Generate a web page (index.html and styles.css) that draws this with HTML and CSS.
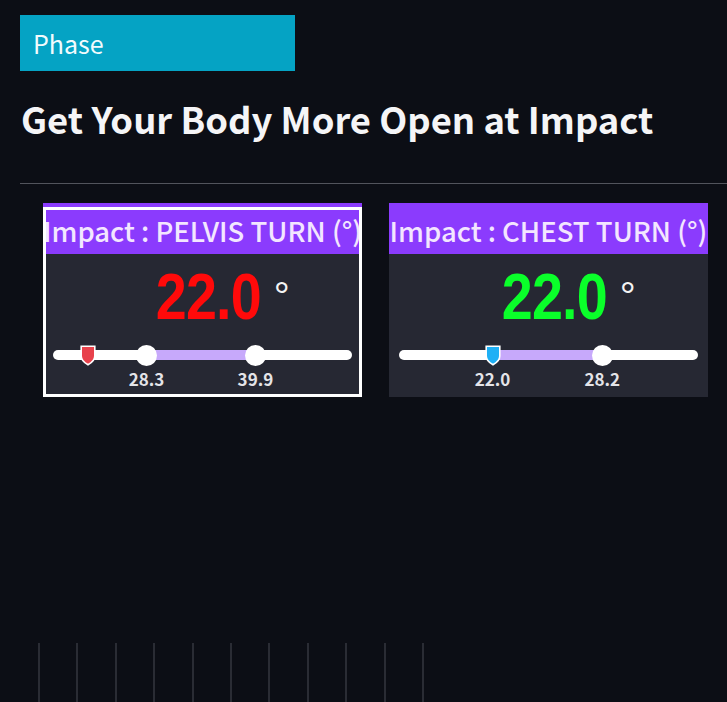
FILE: index.html
```html
<!DOCTYPE html>
<html>
<head>
<meta charset="utf-8">
<link rel="stylesheet" href="styles.css">
</head>
<body>
<div class="page">
  <div class="phase">Phase</div>
  <h1 class="title">Get Your Body More Open at Impact</h1>
  <div class="divider"></div>
  <div class="cards">
    <div class="card selected">
      <div class="card-head"><span>Impact : PELVIS TURN (°)</span></div>
      <div class="card-body">
        <div class="value"><span class="num red">22.0</span><span class="deg">°</span></div>
        <div class="slider">
          <div class="track"></div>
          <div class="range" style="left:31.3%;width:36.4%"></div>
          <div class="thumb" style="left:31.3%"></div>
          <div class="thumb" style="left:67.7%"></div>
          <div class="marker" style="left:11.7%">
            <svg width="16" height="21" viewBox="0 0 16 21"><path d="M1.2 1.2 H14.8 V11 Q14.8 16 8 19.8 Q1.2 16 1.2 11 Z" fill="#e8424c" stroke="#ffffff" stroke-width="1.6"/></svg>
          </div>
          <div class="lbl" style="left:31.3%">28.3</div>
          <div class="lbl" style="left:67.7%">39.9</div>
        </div>
      </div>
      <div class="outline"></div>
    </div>
    <div class="card">
      <div class="card-head"><span>Impact : CHEST TURN (°)</span></div>
      <div class="card-body">
        <div class="value"><span class="num green">22.0</span><span class="deg">°</span></div>
        <div class="slider">
          <div class="track"></div>
          <div class="range" style="left:31.3%;width:36.7%"></div>
          <div class="thumb" style="left:68%"></div>
          <div class="marker" style="left:31.3%">
            <svg width="16" height="21" viewBox="0 0 16 21"><path d="M1.2 1.2 H14.8 V11 Q14.8 16 8 19.8 Q1.2 16 1.2 11 Z" fill="#1fb0f5" stroke="#ffffff" stroke-width="1.6"/></svg>
          </div>
          <div class="lbl" style="left:31.3%">22.0</div>
          <div class="lbl" style="left:68%">28.2</div>
        </div>
      </div>
    </div>
  </div>
  <div class="ticks">
    <i></i><i></i><i></i><i></i><i></i><i></i><i></i><i></i><i></i><i></i><i></i>
  </div>
</div>
</body>
</html>
```
FILE: styles.css
```css
* { box-sizing: border-box; }
html, body { margin: 0; padding: 0; }
body {
  background: #0c0e15;
  font-family: "Noto Sans CJK JP", "Noto Sans", sans-serif;
  color: #ffffff;
  overflow: hidden;
}
.page {
  height: 702px;
  display: flex;
  flex-direction: column;
}
.phase {
  margin: 15px 0 0 20px;
  width: 275px;
  height: 56px;
  background: #05a3c4;
  color: #f2fbfd;
  font-size: 25px;
  line-height: 56px;
  padding-left: 13px;
}
.title {
  margin: 22px 0 0 21px;
  font-size: 36.4px;
  font-weight: 700;
  line-height: 50px;
  color: #f5f5f7;
}
.divider {
  margin: 40px 0 0 20px;
  height: 1px;
  background: #52545c;
}
.cards {
  display: flex;
  gap: 27px;
  margin: 19px 0 0 43px;
}
.card {
  position: relative;
  width: 319px;
  display: flex;
  flex-direction: column;
}
.card-head {
  height: 51px;
  background: #8b3bfd;
  color: #f3e6ff;
  font-size: 27.5px;
  font-weight: 500;
  display: flex;
  justify-content: center;
  align-items: center;
  overflow: hidden;
  white-space: nowrap;
  padding-top: 3px;
}
.card-head span { flex: none; }
.card-body {
  height: 143px;
  background: #262833;
  position: relative;
}
.outline {
  position: absolute;
  left: 0; right: 0; top: 4px; bottom: 0;
  border: 3px solid #ffffff;
  pointer-events: none;
}
.value {
  display: flex;
  justify-content: center;
  align-items: flex-start;
  padding: 10px 0 0 40px;
  height: 80px;
}
.num {
  font-family: "Liberation Sans", Arial, sans-serif;
  font-weight: 700;
  font-size: 64px;
  line-height: 66px;
  letter-spacing: -1px;
  display: inline-block;
  transform: scaleX(0.87);
  margin: 0 -7px;
}
.red { color: #ff0a0a; }
.green { color: #0aff2a; }
.deg {
  font-family: "Liberation Sans", Arial, sans-serif;
  font-size: 40px;
  line-height: 40px;
  margin-left: 12px;
  margin-top: 12px;
  color: #f4f4f4;
}
.slider {
  position: relative;
  margin: 0 10px 0 10px;
  height: 60px;
}
.track {
  position: absolute;
  left: 0; right: 0; top: 16px;
  height: 10px;
  border-radius: 5px;
  background: #ffffff;
}
.range {
  position: absolute;
  top: 16px;
  height: 10px;
  background: #c7a9fb;
}
.thumb {
  position: absolute;
  top: 10.5px;
  width: 21px;
  height: 21px;
  margin-left: -10.5px;
  border-radius: 50%;
  background: #ffffff;
}
.marker {
  position: absolute;
  top: 11px;
  width: 16px;
  height: 21px;
  margin-left: -8px;
}
.marker svg { display: block; }
.lbl {
  position: absolute;
  top: 34px;
  width: 60px;
  margin-left: -30px;
  text-align: center;
  font-size: 17px;
  font-weight: 700;
  line-height: 22px;
  color: #e4e4e8;
}
.ticks {
  margin-top: auto;
  height: 59px;
  display: flex;
  padding-left: 38px;
  gap: 36.4px;
}
.ticks i {
  display: block;
  width: 2px;
  height: 100%;
  background: #2a2c34;
}
```
